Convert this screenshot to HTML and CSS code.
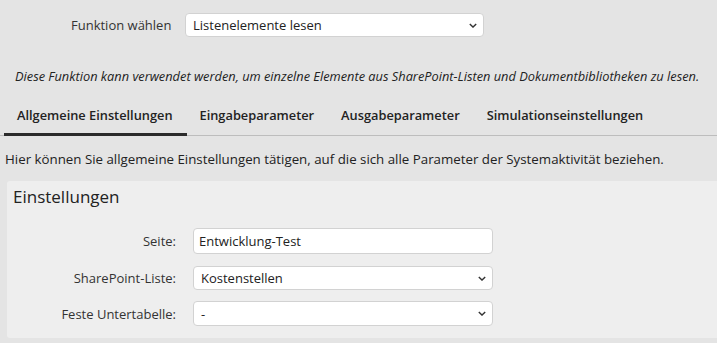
FILE: index.html
```html
<!DOCTYPE html>
<html lang="de">
<head>
    <meta charset="UTF-8">
    <title>Systemaktivität</title>
    <link rel="stylesheet" href="styles.css">
</head>
<body>
    <div class="function-row">
        <label class="function-label">Funktion wählen</label>
        <div class="select-box function-select">
            <span>Listenelemente lesen</span>
            <svg class="chevron" viewBox="0 0 10 6"><path d="M1 1l4 4 4-4"/></svg>
        </div>
    </div>

    <p class="description">Diese Funktion kann verwendet werden, um einzelne Elemente aus SharePoint-Listen und Dokumentbibliotheken zu lesen.</p>

    <ul class="tabs">
        <li class="tab active">Allgemeine Einstellungen</li>
        <li class="tab">Eingabeparameter</li>
        <li class="tab">Ausgabeparameter</li>
        <li class="tab">Simulationseinstellungen</li>
    </ul>

    <p class="hint">Hier können Sie allgemeine Einstellungen tätigen, auf die sich alle Parameter der Systemaktivität beziehen.</p>

    <div class="panel">
        <h2>Einstellungen</h2>
        <div class="form-row">
            <label>Seite:</label>
            <div class="text-box">Entwicklung-Test</div>
        </div>
        <div class="form-row">
            <label>SharePoint-Liste:</label>
            <div class="select-box">
                <span>Kostenstellen</span>
                <svg class="chevron" viewBox="0 0 10 6"><path d="M1 1l4 4 4-4"/></svg>
            </div>
        </div>
        <div class="form-row">
            <label>Feste Untertabelle:</label>
            <div class="select-box">
                <span>-</span>
                <svg class="chevron" viewBox="0 0 10 6"><path d="M1 1l4 4 4-4"/></svg>
            </div>
        </div>
    </div>
</body>
</html>
```
FILE: styles.css
```css
body {
    margin: 0;
    background-color: #e4e4e4;
    font-family: 'Open Sans', sans-serif;
    font-size: 13px;
    color: #333;
}

.function-row {
    display: flex;
    align-items: center;
    padding: 13px 0 0 71px;
}
.function-label { width: 114px; }
.function-select { width: 299px; height: 24px; }

.select-box, .text-box {
    box-sizing: border-box;
    background-color: #fff;
    border: 1px solid #d2d2d2;
    border-radius: 4px;
    display: flex;
    align-items: center;
    justify-content: space-between;
    padding: 0 6px 0 7px;
    color: #222;
}
.chevron {
    width: 8px;
    height: 5px;
    fill: none;
    stroke: #333;
    stroke-width: 1.7;
}

.description {
    margin: 30px 0 0 15px;
    font-style: italic;
    font-size: 12.8px;
    color: #222;
}

.tabs {
    list-style: none;
    margin: 19px 0 0 0;
    padding: 0 0 0 4px;
    display: flex;
    border-bottom: 1px solid #bdbdbd;
}
.tab {
    padding: 2px 14px 9px 13px;
    font-size: 12.8px;
    font-weight: 600;
    color: #222;
    border-bottom: 3px solid transparent;
    margin-bottom: -1px;
}
.tab.active { border-bottom-color: #2b2b2b; }

.hint {
    margin: 14px 0 0 5px;
    font-size: 13.3px;
    color: #222;
}

.panel {
    background-color: #eeeeee;
    margin: 13px 0 0 7px;
    padding: 4px 0 12px 6px;
    border-radius: 3px 0 0 3px;
}
.panel h2 {
    margin: 0 0 20px 0;
    font-size: 17px;
    font-weight: 500;
    color: #222;
}

.form-row {
    display: flex;
    align-items: center;
    margin-bottom: 11px;
}
.form-row:first-of-type { margin-bottom: 12px; }
.form-row:last-child { margin-bottom: 0; }
.form-row label {
    width: 180px;
    text-align: right;
    padding-right: 17px;
    box-sizing: border-box;
}
.form-row .text-box, .form-row .select-box {
    width: 300px;
    height: 24px;
}
.form-row .text-box { height: 26px; padding-left: 5px; }
.form-row:last-child .select-box { height: 25px; }
```
